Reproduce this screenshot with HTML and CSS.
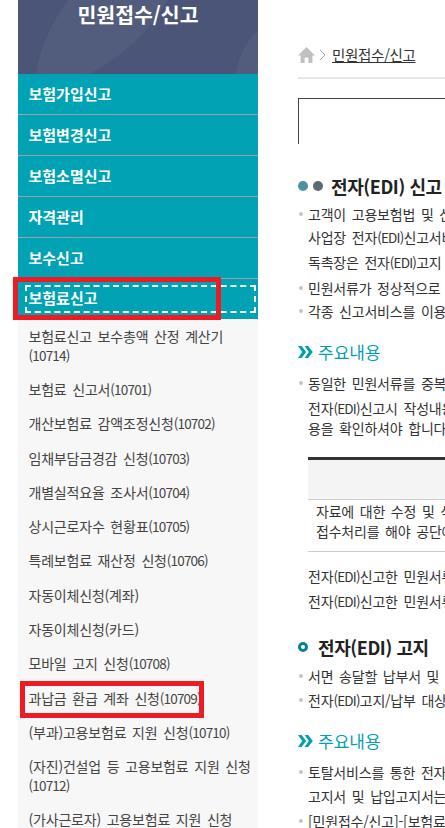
FILE: index.html
```html
<!DOCTYPE html>
<html lang="ko">
<head>
<meta charset="utf-8">
<title>민원접수/신고</title>
<link rel="stylesheet" href="styles.css">
</head>
<body>
<div class="page">
  <aside class="side">
    <header class="side-head">
      <svg class="side-deco" viewBox="0 0 240 74" preserveAspectRatio="none" aria-hidden="true">
        <path d="M18 74 C22 46 34 22 50 0 L150 0 C130 34 100 60 70 74 Z" fill="#525c7c"/>
        <path d="M218 74 C221 54 229 40 240 30 L240 74 Z" fill="#525c7c"/>
      </svg>
      <h1 class="side-title">민원접수/신고</h1>
    </header>
    <ul class="menu">
      <li class="menu-item">보험가입신고</li>
      <li class="menu-item">보험변경신고</li>
      <li class="menu-item">보험소멸신고</li>
      <li class="menu-item">자격관리</li>
      <li class="menu-item">보수신고</li>
      <li class="menu-item menu-active"><span class="focus-ring"></span><span class="red-a"></span>보험료신고</li>
    </ul>
    <ul class="sub">
      <li class="sub-item">보험료신고 보수총액 산정 계산기<span class="n">(10714)</span></li>
      <li class="sub-item">보험료 신고서<span class="n">(10701)</span></li>
      <li class="sub-item">개산보험료 감액조정신청<span class="n">(10702)</span></li>
      <li class="sub-item">임채부담금경감 신청<span class="n">(10703)</span></li>
      <li class="sub-item">개별실적요율 조사서<span class="n">(10704)</span></li>
      <li class="sub-item">상시근로자수 현황표<span class="n">(10705)</span></li>
      <li class="sub-item">특례보험료 재산정 신청<span class="n">(10706)</span></li>
      <li class="sub-item">자동이체신청(계좌)</li>
      <li class="sub-item">자동이체신청(카드)</li>
      <li class="sub-item">모바일 고지 신청<span class="n">(10708)</span></li>
      <li class="sub-item sub-marked"><span class="red-b"></span>과납금 환급 계좌 신청<span class="n">(10709)</span></li>
      <li class="sub-item">(부과)고용보험료 지원 신청<span class="n">(10710)</span></li>
      <li class="sub-item">(자진)건설업 등 고용보험료 지원 신청<span class="n">(10712)</span></li>
      <li class="sub-item">(가사근로자) 고용보험료 지원 신청</li>
    </ul>
  </aside>
  <main class="main">
    <nav class="crumb">
      <svg class="home" viewBox="0 0 17 16" aria-hidden="true"><path d="M8.5 0 L17 8.4 L14.4 8.4 L14.4 16 L10.4 16 L10.4 10.5 L6.6 10.5 L6.6 16 L2.6 16 L2.6 8.4 L0 8.4 Z" fill="#c0c0c0"/></svg>
      <svg class="chev" viewBox="0 0 7 12" aria-hidden="true"><path d="M1 1 L6 6 L1 11" fill="none" stroke="#a8a8a8" stroke-width="1"/></svg>
      <a class="crumb-link">민원접수/신고</a>
    </nav>
    <div class="search-box"></div>

    <h2 class="h-edi"><span class="dots"><i class="dot dot-a"></i><i class="dot dot-b"></i></span>전자(EDI) 신고</h2>
    <ul class="list l1">
      <li class="bul line">고객이 고용보험법 및 산재보험법에 따른 각종</li>
      <li class="line l-tight">사업장 전자<span class="n">(EDI)</span>신고서비스를</li>
      <li class="line l-gap">독촉장은 전자<span class="n">(EDI)</span>고지 서비스로</li>
      <li class="bul line l-gap2">민원서류가 정상적으로 접수되면</li>
      <li class="bul line l-tight">각종 신고서비스를 이용하시려면</li>
    </ul>

    <h3 class="h-sub h-sub1"><svg class="arrows" viewBox="0 0 15 12" aria-hidden="true"><path d="M0 0 H3.6 L8.2 6 L3.6 12 H0 L4.2 6 Z M6.6 0 H10.2 L14.8 6 L10.2 12 H6.6 L10.8 6 Z" fill="#00a0b0"/></svg>주요내용</h3>
    <ul class="list l2">
      <li class="bul line">동일한 민원서류를 중복하여 신고하지</li>
      <li class="line l-gap">전자<span class="n">(EDI)</span>신고시 작성내용을</li>
      <li class="line l-gap3">용을 확인하셔야 합니다.</li>
    </ul>
    <div class="tbl">
      <div class="tbl-head"></div>
      <div class="tbl-body">
        <p class="tbl-line">자료에 대한 수정 및 삭제를 위해서는</p>
        <p class="tbl-line">접수처리를 해야 공단에서</p>
      </div>
    </div>
    <p class="line note n1">전자<span class="n">(EDI)</span>신고한 민원서류의</p>
    <p class="line note n2">전자<span class="n">(EDI)</span>신고한 민원서류는</p>

    <h2 class="h-edi h-edi2"><i class="ring"></i>전자(EDI) 고지</h2>
    <ul class="list l3">
      <li class="bul line">서면 송달할 납부서 및 납입고지서를</li>
      <li class="bul line">전자<span class="n">(EDI)</span>고지/납부 대상</li>
    </ul>
    <h3 class="h-sub h-sub2"><svg class="arrows" viewBox="0 0 15 12" aria-hidden="true"><path d="M0 0 H3.6 L8.2 6 L3.6 12 H0 L4.2 6 Z M6.6 0 H10.2 L14.8 6 L10.2 12 H6.6 L10.8 6 Z" fill="#00a0b0"/></svg>주요내용</h3>
    <ul class="list l4">
      <li class="bul line">토탈서비스를 통한 전자<span class="n">(EDI)</span></li>
      <li class="line">고지서 및 납입고지서는</li>
      <li class="bul line n2">[민원접수/신고]-[보험료신고]</li>
    </ul>
  </main>
</div>
</body>
</html>
```
FILE: styles.css
```css
* { box-sizing: border-box; margin: 0; padding: 0; }
html, body { width: 445px; height: 828px; overflow: hidden; background: #fff; }
body { font-family: "Noto Sans CJK KR", "Noto Sans", sans-serif; color: #333; }
ul { list-style: none; }
i { display: block; }

.page { display: flex; height: 828px; overflow: hidden; padding-left: 18px; }

.side { width: 240px; flex: none; background: #f7f7f7; height: 828px; }
.side-head { position: relative; height: 74px; background: #4a5578; overflow: hidden; }
.side-deco { position: absolute; inset: 0; width: 100%; height: 100%; }
.side-title { position: relative; text-align: center; font-size: 20.5px; font-weight: 700; line-height: 26px; color: #fff; padding-top: 1px; }

.menu-item { position: relative; height: 41px; line-height: 39px; padding-left: 10.5px; background: #00a2b3; color: #fff; font-size: 15px; font-weight: 700; border-bottom: 1px solid #97a3a6; }
.menu-active { border-bottom: 0; height: 40px; line-height: 38px; }
.focus-ring { position: absolute; left: 7px; top: 6px; right: 2px; height: 28px; border: 2px dashed #fff; }
.red-a { position: absolute; left: -5px; top: -2px; width: 208px; height: 43px; border: 5px solid #ed1c24; }

.sub-item { position: relative; padding: 7.6px 4px 7.6px 10.5px; font-size: 14px; line-height: 19.1px; color: #444; letter-spacing: -0.2px; word-spacing: 2px; }
.red-b { position: absolute; left: 2px; top: 0; width: 184px; height: 37px; border: 5px solid #ed1c24; }
.n { font-size: 13.5px; line-height: 0; letter-spacing: -0.8px; }

.main { flex: 1; min-width: 0; margin-left: 40px; overflow: hidden; }
.line { white-space: nowrap; font-size: 14px; line-height: 24px; color: #333; letter-spacing: -0.2px; word-spacing: 2px; }

.crumb { display: flex; align-items: center; height: 77px; padding-top: 33px; }
.home { width: 17px; height: 16px; flex: none; }
.chev { width: 7px; height: 12px; margin-left: 4px; flex: none; }
.crumb-link { margin-left: 6px; font-size: 14.5px; line-height: 20px; text-decoration: underline; color: #333; letter-spacing: -0.3px; white-space: nowrap; }

.search-box { border-top: 2px solid #e6e6e6; height: 65px; padding-top: 19px; }
.search-box::after { content: ""; display: block; height: 45px; border-top: 1px solid #3c4458; border-left: 1px solid #3c4458; }

.h-edi { display: flex; align-items: center; font-size: 18px; font-weight: 700; line-height: 26px; color: #222; white-space: nowrap; margin-top: 31px; letter-spacing: -0.4px; }
.dots { display: flex; gap: 5px; margin-right: 8px; flex: none; }
.dot { width: 10px; height: 10px; border-radius: 50%; }
.dot-a { background: #4f91a3; }
.dot-b { background: #5b6b74; }
.ring { width: 10px; height: 10px; border-radius: 50%; border: 3.5px solid #08809a; margin-right: 10px; flex: none; }

.list .line { padding-left: 10px; position: relative; }
.bul::before { content: ""; position: absolute; left: 1px; top: 10px; width: 4px; height: 4px; border-radius: 50%; background: #c4c4c4; }
.l1 { margin-top: 3px; }
.l-tight { margin-top: -1px; }
.l-gap { margin-top: 1px; }
.l-gap2 { margin-top: 2px; }

.h-sub { display: flex; align-items: center; font-size: 17px; font-weight: 400; line-height: 24px; color: #00a0b0; white-space: nowrap; }
.arrows { width: 15px; height: 12px; margin-right: 5px; flex: none; }
.h-sub1 { margin-top: 17px; }
.l2 { margin-top: 7px; }
.l-gap3 { margin-top: -4px; }

.tbl { margin: 17px 0 0 10px; }
.tbl-head { height: 43px; background: #f4f4f4; border-top: 3px solid #333; border-bottom: 1px solid #ccc; }
.tbl-body { border-bottom: 1px solid #ccc; padding: 1px 0 10px 8px; }
.tbl-line { font-size: 14px; line-height: 20px; white-space: nowrap; color: #333; letter-spacing: -0.2px; word-spacing: 2px; }

.note { padding-left: 10px; }
.n1 { margin-top: 12px; }
.n2 { margin-top: 1px; }

.h-edi2 { margin-top: 21px; }
.l3 { margin-top: 4px; }
.h-sub2 { margin-top: 17px; }
.l4 { margin-top: 7px; }
```
